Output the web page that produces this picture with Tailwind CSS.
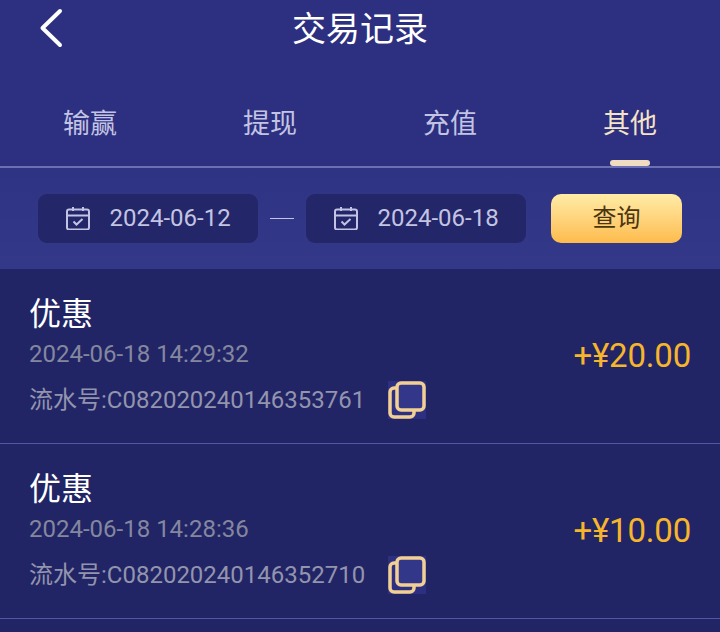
<!DOCTYPE html>
<html lang="zh-CN">
<head>
    <meta charset="UTF-8">
    <title>交易记录</title>
    <script src="https://cdn.jsdelivr.net/npm/@tailwindcss/browser@4"></script>
</head>
<body class="w-[720px] h-[632px] overflow-hidden bg-[#212566] font-['Roboto','Noto_Sans_CJK_SC',sans-serif]">
    <!-- Header -->
    <div class="h-[166px] bg-[#2d3080] flex flex-col">
        <div class="relative h-[58px] flex items-center justify-center">
            <svg class="absolute left-[38px] top-[8px]" width="26" height="40" viewBox="0 0 26 40" fill="none" stroke="#ffffff" stroke-width="4" stroke-linecap="round" stroke-linejoin="round">
                <path d="M22 3 L4.500 20 L22 37"/>
            </svg>
            <h1 class="text-[34px] leading-[40px] text-white">交易记录</h1>
        </div>
        <!-- Tabs -->
        <div class="grid grid-cols-4 mt-[47px] text-[27px] leading-[38px] text-[#c3c4e3] text-center">
            <div>输赢</div>
            <div>提现</div>
            <div>充值</div>
            <div class="relative text-[#f5e3c6]">其他
                <div class="absolute left-[70px] top-[55px] w-[40px] h-[6px] rounded-full bg-[#f0dcc0]"></div>
            </div>
        </div>
    </div>
    <div class="h-[2px] bg-[#6c6fb4]"></div>

    <!-- Date filter -->
    <div class="h-[101px] bg-gradient-to-b from-[#2f3383] to-[#343888] pl-[38px] flex items-center text-[24px] text-[#c3c4e3]">
        <div class="w-[220px] h-[49px] rounded-[9px] bg-[#232668] flex items-center pl-[28px] mt-[-1px]">
            <svg width="24" height="24" viewBox="0 0 24 24" fill="none" stroke="#c3c4e3" stroke-width="2">
                <rect x="1" y="3.500" width="22" height="20" rx="2"/>
                <path d="M1 9.500 H23 M7 1 V5 M17 1 V5"/>
                <path d="M7.500 15.500 L10.500 18.500 L16.500 13"/>
            </svg>
            <span class="ml-[19.500px]">2024-06-12</span>
        </div>
        <div class="w-[24px] h-[1px] bg-[#c3c4e3] mx-[12px] mt-[-1px]"></div>
        <div class="w-[220px] h-[49px] rounded-[9px] bg-[#232668] flex items-center pl-[28px] mt-[-1px]">
            <svg width="24" height="24" viewBox="0 0 24 24" fill="none" stroke="#c3c4e3" stroke-width="2">
                <rect x="1" y="3.500" width="22" height="20" rx="2"/>
                <path d="M1 9.500 H23 M7 1 V5 M17 1 V5"/>
                <path d="M7.500 15.500 L10.500 18.500 L16.500 13"/>
            </svg>
            <span class="ml-[19.500px]">2024-06-18</span>
        </div>
        <button class="ml-[25px] mt-[-1px] w-[131px] h-[49px] rounded-[10px] bg-gradient-to-b from-[#ffeca6] to-[#fdbb4a] text-[#4a3511] text-[24px] leading-[46px]">查询</button>
    </div>

    <!-- Records -->
    <div class="border-b border-[#5357a6] h-[175px] pl-[29px] pr-[29px] flex items-center justify-between">
        <div class="flex flex-col mt-[4px]">
            <div class="text-[32px] leading-[44px] text-white">优惠</div>
            <div class="text-[24px] leading-[36px] text-[#85879f]">2024-06-18 14:29:32</div>
            <div class="flex items-center h-[48px] mt-[4px] text-[24px] text-[#9394ad]">
                <span>流水号:C082020240146353761</span>
                <svg class="ml-[23px]" width="38" height="38" viewBox="0 0 38 38" fill="none" stroke="#f2cf94" stroke-width="3.500">
                    <rect width="38" height="38" fill="#2d3080" stroke="none"/>
                    <path d="M9 7 H6 a4 4 0 0 0 -4 4 V32 a4 4 0 0 0 4 4 H22 a4 4 0 0 0 4 -4 V30"/>
                    <rect x="9" y="2" width="27" height="27" rx="4" fill="#33378a"/>
                </svg>
            </div>
        </div>
        <div class="text-[33px] tracking-[-0.2px] text-[#f7b52c]">+¥20.00</div>
    </div>
    <div class="border-b border-[#5357a6] h-[175px] pl-[29px] pr-[29px] flex items-center justify-between">
        <div class="flex flex-col mt-[4px]">
            <div class="text-[32px] leading-[44px] text-white">优惠</div>
            <div class="text-[24px] leading-[36px] text-[#85879f]">2024-06-18 14:28:36</div>
            <div class="flex items-center h-[48px] mt-[4px] text-[24px] text-[#9394ad]">
                <span>流水号:C082020240146352710</span>
                <svg class="ml-[23px]" width="38" height="38" viewBox="0 0 38 38" fill="none" stroke="#f2cf94" stroke-width="3.500">
                    <rect width="38" height="38" fill="#2d3080" stroke="none"/>
                    <path d="M9 7 H6 a4 4 0 0 0 -4 4 V32 a4 4 0 0 0 4 4 H22 a4 4 0 0 0 4 -4 V30"/>
                    <rect x="9" y="2" width="27" height="27" rx="4" fill="#33378a"/>
                </svg>
            </div>
        </div>
        <div class="text-[33px] tracking-[-0.2px] text-[#f7b52c]">+¥10.00</div>
    </div>
</body>
</html>
